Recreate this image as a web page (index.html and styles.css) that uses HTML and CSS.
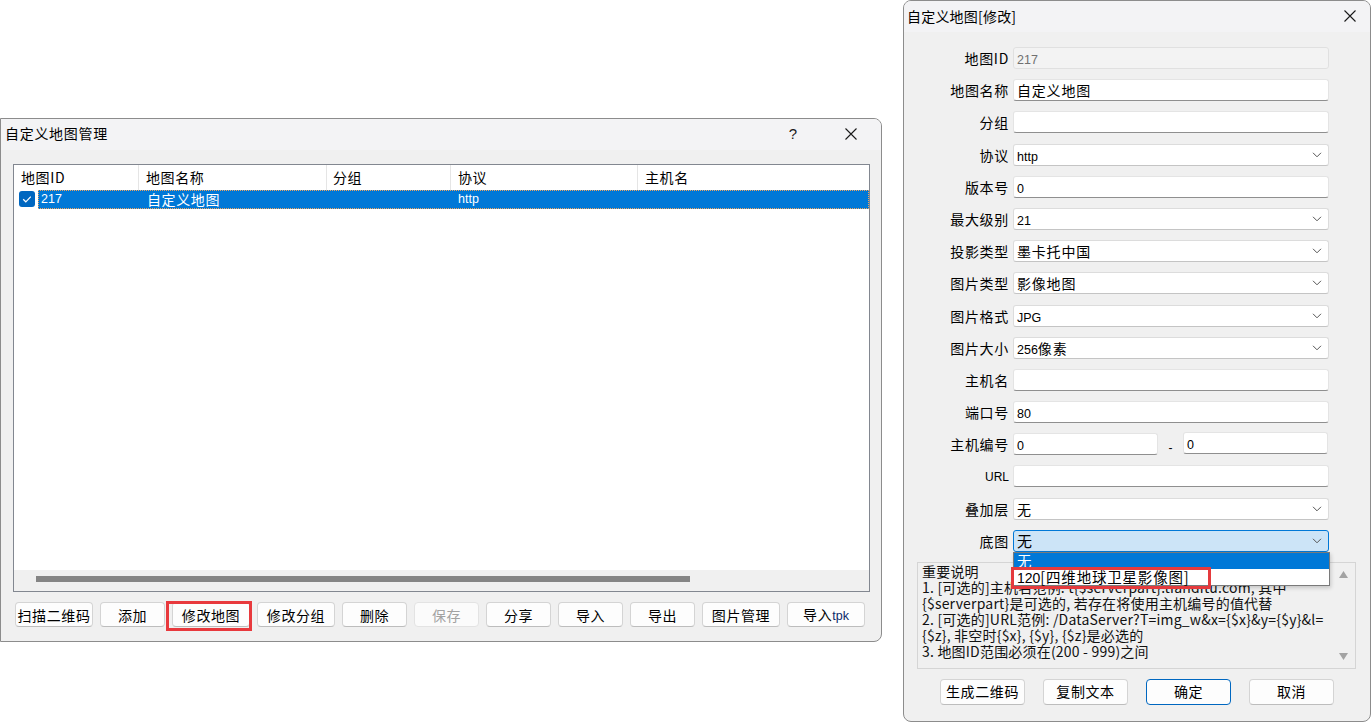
FILE: index.html
```html
<!DOCTYPE html>
<html lang="zh-CN">
<head>
<meta charset="utf-8">
<title>自定义地图</title>
<link rel="stylesheet" href="styles.css">
</head>
<body>
<div class="desk">

  <section class="win win-manage">
    <header class="titlebar">
      <span class="title">自定义地图管理</span>
      <div class="caption">
        <span class="cap-help">?</span>
        <span class="cap-close"><svg width="12" height="12" viewBox="0 0 12 12"><path d="M0.5 0.5L11.5 11.5M11.5 0.5L0.5 11.5" stroke="#1a1a1a" stroke-width="1.1" fill="none"/></svg></span>
      </div>
    </header>
    <div class="manage-body">
      <div class="list">
        <div class="list-head">
          <div class="hc h1">地图ID</div>
          <div class="hc h2">地图名称</div>
          <div class="hc h3">分组</div>
          <div class="hc h4">协议</div>
          <div class="hc h5">主机名</div>
        </div>
        <div class="list-row">
          <div class="chk-area">
            <svg class="chk" width="16" height="16" viewBox="0 0 16 16"><rect x="0" y="0" width="16" height="16" rx="3" fill="#0067c0"/><path d="M4.2 8.3L6.8 10.8L11.8 5.6" stroke="#fff" stroke-width="1.2" fill="none"/></svg>
          </div>
          <div class="row-sel">
            <div class="rc r1 lat">217</div>
            <div class="rc r2">自定义地图</div>
            <div class="rc r3"></div>
            <div class="rc r4 lat">http</div>
            <div class="rc r5"></div>
          </div>
        </div>
        <div class="list-fill"></div>
        <div class="hscroll"><div class="thumb"></div></div>
      </div>
      <div class="btn-row">
        <button class="btn w78">扫描二维码</button>
        <button class="btn w65">添加</button>
        <button class="btn w78 marked">修改地图</button>
        <button class="btn w78">修改分组</button>
        <button class="btn w65">删除</button>
        <button class="btn w65 disabled">保存</button>
        <button class="btn w65">分享</button>
        <button class="btn w65">导入</button>
        <button class="btn w65">导出</button>
        <button class="btn w78">图片管理</button>
        <button class="btn w78">导入<span class="lat-btn">tpk</span></button>
      </div>
    </div>
  </section>

  <section class="win win-edit">
    <header class="titlebar">
      <span class="title title-edit">自定义地图[修改]</span>
      <div class="caption">
        <span class="cap-close cap-close-edit"><svg width="12" height="12" viewBox="0 0 12 12"><path d="M0.5 0.5L11.5 11.5M11.5 0.5L0.5 11.5" stroke="#1a1a1a" stroke-width="1.1" fill="none"/></svg></span>
      </div>
    </header>
    <div class="edit-body">
      <div class="form">
        <label class="lb">地图ID</label>
        <div class="tb dis"><span class="lat">217</span></div>

        <label class="lb">地图名称</label>
        <div class="tb"><span class="cv">自定义地图</span></div>

        <label class="lb">分组</label>
        <div class="tb"></div>

        <label class="lb">协议</label>
        <div class="sel"><span class="lat">http</span><svg class="chev" width="10" height="6" viewBox="0 0 10 6"><path d="M1 0.8L5 4.8L9 0.8" stroke="#555" stroke-width="1" fill="none"/></svg></div>

        <label class="lb">版本号</label>
        <div class="tb"><span class="lat">0</span></div>

        <label class="lb">最大级别</label>
        <div class="sel"><span class="lat">21</span><svg class="chev" width="10" height="6" viewBox="0 0 10 6"><path d="M1 0.8L5 4.8L9 0.8" stroke="#555" stroke-width="1" fill="none"/></svg></div>

        <label class="lb">投影类型</label>
        <div class="sel"><span class="cv">墨卡托中国</span><svg class="chev" width="10" height="6" viewBox="0 0 10 6"><path d="M1 0.8L5 4.8L9 0.8" stroke="#555" stroke-width="1" fill="none"/></svg></div>

        <label class="lb">图片类型</label>
        <div class="sel"><span class="cv">影像地图</span><svg class="chev" width="10" height="6" viewBox="0 0 10 6"><path d="M1 0.8L5 4.8L9 0.8" stroke="#555" stroke-width="1" fill="none"/></svg></div>

        <label class="lb">图片格式</label>
        <div class="sel"><span class="lat">JPG</span><svg class="chev" width="10" height="6" viewBox="0 0 10 6"><path d="M1 0.8L5 4.8L9 0.8" stroke="#555" stroke-width="1" fill="none"/></svg></div>

        <label class="lb">图片大小</label>
        <div class="sel"><span class="lat">256</span><span class="cv">像素</span><svg class="chev" width="10" height="6" viewBox="0 0 10 6"><path d="M1 0.8L5 4.8L9 0.8" stroke="#555" stroke-width="1" fill="none"/></svg></div>

        <label class="lb">主机名</label>
        <div class="tb"></div>

        <label class="lb">端口号</label>
        <div class="tb"><span class="lat">80</span></div>

        <label class="lb">主机编号</label>
        <div class="pair">
          <div class="tb half"><span class="lat">0</span></div>
          <span class="dash">-</span>
          <div class="tb half up"><span class="lat">0</span></div>
        </div>

        <label class="lb lb-url">URL</label>
        <div class="tb"></div>

        <label class="lb">叠加层</label>
        <div class="sel"><span class="cv">无</span><svg class="chev" width="10" height="6" viewBox="0 0 10 6"><path d="M1 0.8L5 4.8L9 0.8" stroke="#555" stroke-width="1" fill="none"/></svg></div>

        <label class="lb">底图</label>
        <div class="sel focus"><span class="cv">无</span><svg class="chev" width="10" height="6" viewBox="0 0 10 6"><path d="M1 0.8L5 4.8L9 0.8" stroke="#555" stroke-width="1" fill="none"/></svg>
          <div class="dropdown">
            <div class="dd-item on">无</div>
            <div class="dd-item"><span class="dd-lat">120</span>[四维地球卫星影像图]</div>
            <div class="dd-mark"></div>
          </div>
        </div>
      </div>

      <div class="notes">
        <div class="notes-text">
          <p>重要说明</p>
          <p>1. [可选的]主机名范例: t{$serverpart}.tianditu.com, 其中</p>
          <p>{$serverpart}是可选的, 若存在将使用主机编号的值代替</p>
          <p>2. [可选的]URL范例: /DataServer?T=img_w&amp;x={$x}&amp;y={$y}&amp;l=</p>
          <p>{$z}, 非空时{$x}, {$y}, {$z}是必选的</p>
          <p>3. 地图ID范围必须在(200 - 999)之间</p>
        </div>
        <div class="vscroll">
          <svg width="9" height="7" viewBox="0 0 9 7"><path d="M4.5 0L9 7H0z" fill="#a3a3a3"/></svg>
          <svg width="9" height="7" viewBox="0 0 9 7"><path d="M0 0H9L4.5 7z" fill="#a3a3a3"/></svg>
        </div>
      </div>

      <div class="foot">
        <button class="btn fbtn">生成二维码</button>
        <button class="btn fbtn">复制文本</button>
        <button class="btn fbtn default">确定</button>
        <button class="btn fbtn">取消</button>
      </div>
    </div>
  </section>

</div>
</body>
</html>
```

FILE: styles.css
```css
* { box-sizing: border-box; margin: 0; padding: 0; }
html, body { width: 1372px; height: 724px; overflow: hidden; background: #ffffff; }
body {
  font-family: "Noto Sans CJK SC", "Noto Sans", sans-serif;
  font-size: 14px;
  color: #000;
}
.desk { position: relative; width: 1372px; height: 724px; }

.win {
  position: absolute;
  display: flex;
  flex-direction: column;
  background: #f0f0f0;
  border: 1px solid #8c8c8c;
  border-radius: 8px;
  overflow: hidden;
}
.win-manage {
  left: 0; top: 118px; width: 882px; height: 524px;
  border-top-left-radius: 0; border-bottom-left-radius: 0;
}
.win-edit { left: 903px; top: 0; width: 468px; height: 722px; }

.titlebar {
  flex: none;
  height: 31px;
  display: flex;
  align-items: center;
  justify-content: space-between;
  background: #f3f3f5;
}
.title {
  padding-left: 4px;
  padding-bottom: 3px;
  font-size: 14px;
  letter-spacing: 0.7px;
  line-height: 20px;
}
.title-edit { padding-left: 3px; letter-spacing: 0.2px; padding-bottom: 2px; }
.caption { display: flex; align-items: center; height: 100%; }
.cap-help {
  width: 46px; text-align: center;
  font-family: "Liberation Sans", Arial, sans-serif;
  font-size: 15px; color: #1a1a1a;
  padding-bottom: 2px;
}
.cap-close {
  width: 46px; height: 100%;
  display: flex; align-items: center; justify-content: center;
  margin-left: 12px; margin-right: 7px;
  padding-bottom: 2px;
}
.cap-close-edit { width: 40px; margin: 0; padding-bottom: 1px; }

/* ---------- manage dialog ---------- */
.manage-body {
  flex: 1;
  display: flex;
  flex-direction: column;
  padding: 14px 11px 0 12px;
}
.list {
  width: 857px;
  height: 428px;
  border: 1px solid #828790;
  background: #fff;
  display: flex;
  flex-direction: column;
}
.list-head { height: 25px; display: flex; flex: none; }
.hc {
  border-right: 1px solid #e5e5e5;
  padding-left: 7px;
  line-height: 25px;
  font-size: 14px;
  letter-spacing: 0.6px;
  white-space: nowrap;
}
.h1 { width: 125px; }
.h2 { width: 188px; }
.h3 { width: 124px; padding-left: 6px; }
.h4 { width: 187px; }
.h5 { flex: 1; border-right: none; }

.list-row { height: 19px; display: flex; flex: none; }
.chk-area { width: 24px; padding: 1px 0 0 5px; }
.chk { display: block; }
.row-sel {
  flex: 1;
  display: flex;
  background: #0078d7;
  color: #fff;
  outline: 1px dotted #f0a560;
  outline-offset: -1px;
}
.rc { line-height: 19px; white-space: nowrap; font-size: 14px; letter-spacing: 0.6px; }
.r1 { width: 101px; padding-left: 3px; }
.r2 { width: 188px; padding-left: 8px; }
.r3 { width: 124px; }
.r4 { width: 187px; padding-left: 7px; }
.r5 { flex: 1; }
.lat {
  font-family: "Liberation Sans", Arial, sans-serif;
  font-size: 12.5px;
  letter-spacing: 0;
}
.list-fill { flex: 1; }
.hscroll {
  height: 21px;
  flex: none;
  background: #f0f0f0;
  padding-top: 6px;
}
.thumb { margin-left: 22px; width: 654px; height: 6px; background: #858585; }

.btn-row {
  display: flex;
  gap: 7px;
  margin-top: 10px;
  padding-left: 2px;
}
.btn {
  height: 25px;
  background: #fdfdfd;
  border: 1px solid #d4d4d4;
  border-bottom-color: #bdbdbd;
  border-radius: 4px;
  font-family: "Noto Sans CJK SC", sans-serif;
  font-size: 14px;
  letter-spacing: 0.6px;
  color: #000;
  line-height: 22px;
  text-align: center;
  white-space: nowrap;
  position: relative;
}
.w78 { width: 78px; }
.w65 { width: 65px; }
.disabled { color: #a2a2a2; background: #fbfbfb; border-color: #e3e3e3; }
.marked::after {
  content: "";
  position: absolute;
  left: -7px; right: -3px; top: -2px; bottom: -5px;
  border: 3px solid #e8393d;
}
.lat-btn {
  font-family: "Liberation Sans", Arial, sans-serif;
  font-size: 12.5px;
  letter-spacing: 0;
  color: #0a2a6a;
}

/* ---------- edit dialog ---------- */
.edit-body { flex: 1; display: flex; flex-direction: column; }
.form {
  display: grid;
  grid-template-columns: 105px 316px;
  grid-auto-rows: 22px;
  column-gap: 4px;
  row-gap: 10.2px;
  padding-top: 15px;
}
.lb {
  text-align: right;
  line-height: 22px;
  font-size: 14px;
  letter-spacing: 0.7px;
  white-space: nowrap;
}
.lb-url {
  font-family: "Liberation Sans", Arial, sans-serif;
  font-size: 12px;
  letter-spacing: 0;
  padding-top: 1px;
}
.tb, .sel {
  height: 22px;
  background: #fff;
  border: 1px solid #e4e4e4;
  border-bottom-color: #8f8f8f;
  border-radius: 3px;
  padding-left: 3px;
  line-height: 20px;
  white-space: nowrap;
}
.tb.dis {
  background: #f3f3f3;
  border-color: #e0e0e0;
  color: #707070;
}
.sel {
  position: relative;
  border-color: #dcdcdc;
  border-bottom-color: #c4c4c4;
}
.sel.focus {
  background: #cce4f7;
  border-color: #0078d7;
  z-index: 5;
}
.chev { position: absolute; right: 6px; top: 7px; }
.cv { font-size: 14px; letter-spacing: 0.8px; }
.sel.focus .cv { font-size: 15px; }
.pair { display: flex; align-items: center; }
.half { width: 145px; }
.up { margin-top: -3px; }
.dash {
  width: 25px;
  text-align: center;
  padding-top: 8px;
  font-family: "Liberation Sans", Arial, sans-serif;
  font-size: 12px;
}

.dropdown {
  position: absolute;
  top: 21px;
  left: -1px;
  width: 317px;
  background: #fff;
  border: 1px solid #7a7a7a;
  box-shadow: 1px 2px 4px rgba(0,0,0,0.18);
}
.dd-item {
  height: 16px;
  line-height: 16px;
  padding-left: 3px;
  font-size: 14.5px;
  letter-spacing: 0.8px;
  color: #000;
}
.dd-item.on { background: #0078d7; color: #fff; }
.dd-lat { font-family: "Liberation Sans", Arial, sans-serif; font-size: 14px; letter-spacing: 0; }
.dd-mark {
  position: absolute;
  left: -3px; top: 14px;
  width: 200px; height: 22px;
  border: 3px solid #e53a3d;
}

.notes {
  margin: 10px 14px 0 13px;
  height: 107px;
  border: 1px solid #d5d5d5;
  display: flex;
  background: #f0f0f0;
}
.notes-text {
  flex: 1;
  padding: 0 0 0 4px;
  font-size: 14px;
  letter-spacing: 0.2px;
  line-height: 16px;
  color: #111;
  white-space: nowrap;
  overflow: hidden;
}
.vscroll {
  width: 24px;
  display: flex;
  flex-direction: column;
  justify-content: space-between;
  align-items: center;
  padding: 8px 0 8px 0;
}
.vscroll svg { display: block; }

.foot {
  display: flex;
  justify-content: center;
  gap: 18px;
  margin-top: 10px;
}
.fbtn { width: 85px; height: 26px; line-height: 23px; }
.default { border: 1px solid #0067c0; }
```
